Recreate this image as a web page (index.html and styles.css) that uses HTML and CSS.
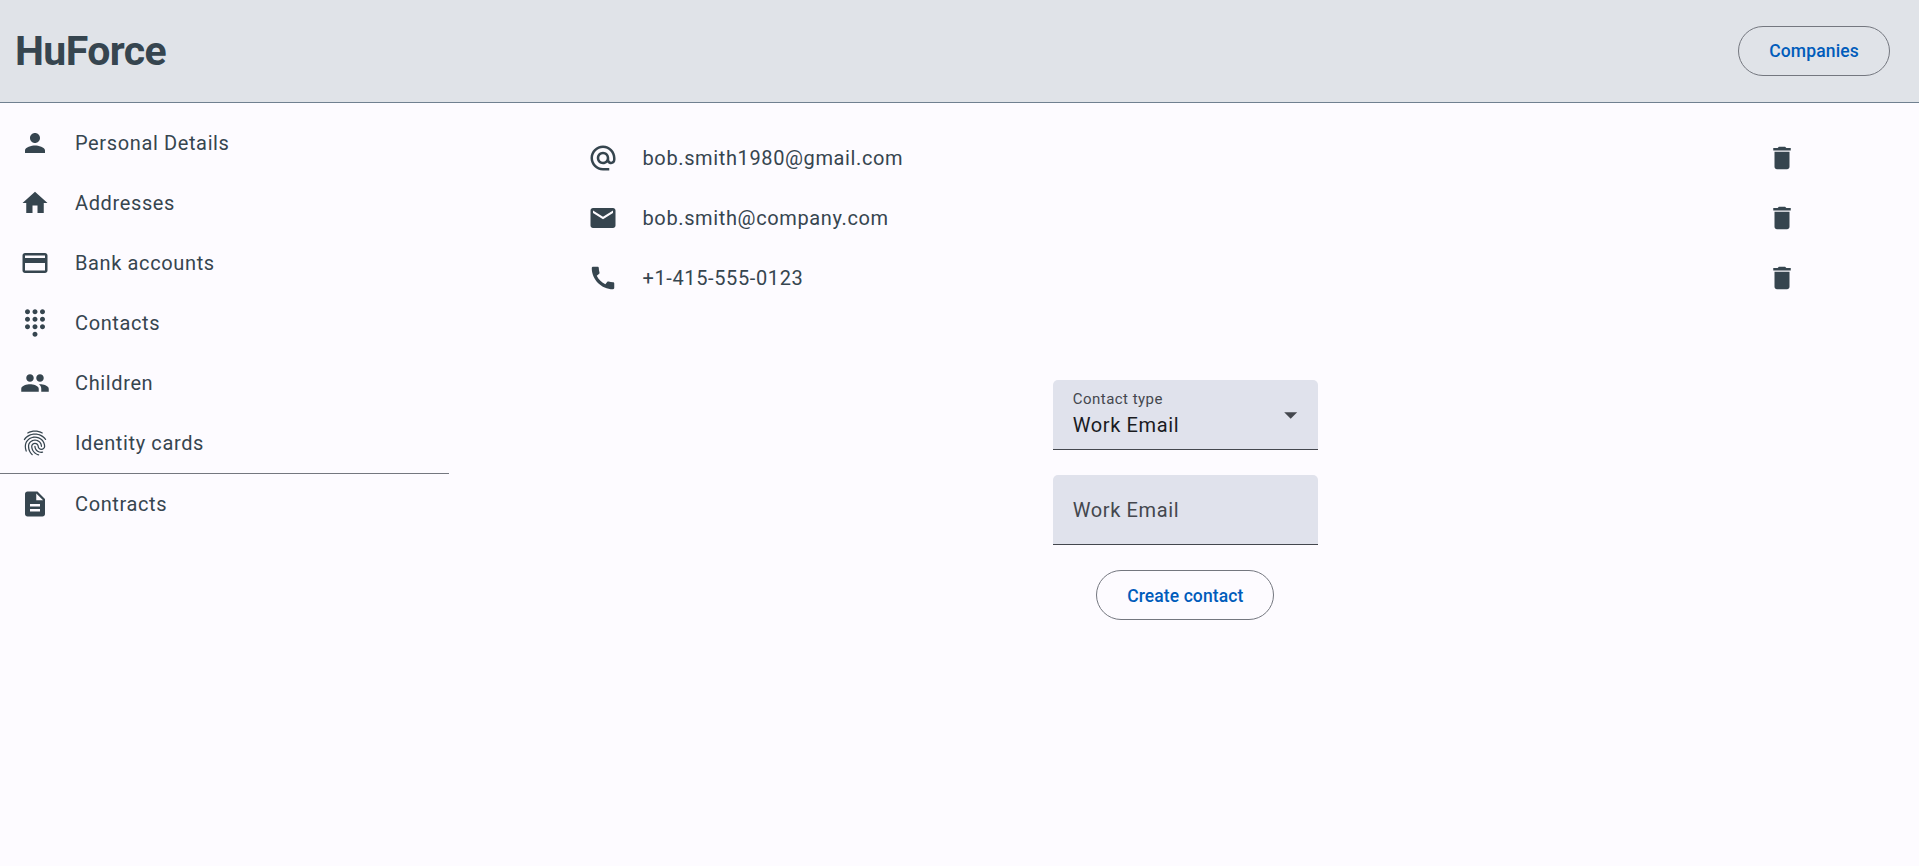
FILE: index.html
```html
<!DOCTYPE html>
<html lang="en">
<head>
<meta charset="utf-8">
<title>HuForce</title>
<link rel="stylesheet" href="styles.css">
</head>
<body>
<header class="topbar">
  <h1 class="brand">HuForce</h1>
  <button class="btn">Companies</button>
</header>
<div class="layout">
  <nav class="sidebar">
    <a class="row"><svg class="icon" viewBox="0 0 24 24"><path d="M12 12c2.21 0 4-1.79 4-4s-1.79-4-4-4-4 1.790-4 4 1.790 4 4 4zm0 2c-2.670 0-8 1.340-8 4v2h16v-2c0-2.660-5.330-4-8-4z"/></svg><span>Personal Details</span></a>
    <a class="row"><svg class="icon" viewBox="0 0 24 24"><path d="M10 20v-6h4v6h5v-8h3L12 3 2 12h3v8z"/></svg><span>Addresses</span></a>
    <a class="row"><svg class="icon" viewBox="0 0 24 24"><path d="M20 4H4c-1.110 0-1.990.89-1.990 2L2 18c0 1.110.89 2 2 2h16c1.110 0 2-.89 2-2V6c0-1.110-.89-2-2-2zm0 14H4v-6h16v6zm0-10H4V6h16v2z"/></svg><span>Bank accounts</span></a>
    <a class="row"><svg class="icon" viewBox="0 0 24 24"><path d="M12 19c-1.100 0-2 .9-2 2s.9 2 2 2 2-.9 2-2-.9-2-2-2zM6 1c-1.100 0-2 .9-2 2s.9 2 2 2 2-.9 2-2-.9-2-2-2zm0 6c-1.100 0-2 .9-2 2s.9 2 2 2 2-.9 2-2-.9-2-2-2zm0 6c-1.100 0-2 .9-2 2s.9 2 2 2 2-.9 2-2-.9-2-2-2zm12-8c1.100 0 2-.9 2-2s-.9-2-2-2-2 .9-2 2 .9 2 2 2zm-6 8c-1.100 0-2 .9-2 2s.9 2 2 2 2-.9 2-2-.9-2-2-2zm6 0c-1.100 0-2 .9-2 2s.9 2 2 2 2-.9 2-2-.9-2-2-2zm0-6c-1.100 0-2 .9-2 2s.9 2 2 2 2-.9 2-2-.9-2-2-2zm-6 0c-1.100 0-2 .9-2 2s.9 2 2 2 2-.9 2-2-.9-2-2-2zm0-6c-1.100 0-2 .9-2 2s.9 2 2 2 2-.9 2-2-.9-2-2-2z"/></svg><span>Contacts</span></a>
    <a class="row"><svg class="icon" viewBox="0 0 24 24"><path d="M16 11c1.660 0 2.990-1.340 2.990-3S17.660 5 16 5s-3 1.340-3 3 1.340 3 3 3zm-8 0c1.660 0 2.990-1.340 2.990-3S9.660 5 8 5 5 6.340 5 8s1.340 3 3 3zm0 2c-2.330 0-7 1.170-7 3.500V19h14v-2.500c0-2.330-4.670-3.500-7-3.500zm8 0c-.29 0-.62.020-.97.050 1.160.84 1.970 1.970 1.970 3.450V19h6v-2.500c0-2.330-4.670-3.500-7-3.500z"/></svg><span>Children</span></a>
    <a class="row"><svg class="icon" viewBox="0 0 24 24"><path d="M17.810 4.470c-.08 0-.16-.02-.23-.06C15.660 3.420 14 3 12.010 3c-1.980 0-3.860.47-5.570 1.410-.24.13-.54.04-.68-.2-.13-.24-.04-.55.2-.68C7.820 2.520 9.860 2 12.010 2c2.130 0 3.990.47 6.030 1.520.25.13.34.43.21.67-.09.18-.26.28-.44.28zM3.500 9.720c-.1 0-.2-.03-.29-.09-.23-.16-.28-.47-.12-.7.99-1.400 2.250-2.500 3.750-3.270C9.980 4.040 14 4.030 17.150 5.650c1.500.77 2.760 1.860 3.750 3.250.16.22.11.54-.12.7-.23.16-.54.11-.7-.12-.9-1.260-2.040-2.250-3.390-2.940-2.870-1.470-6.540-1.470-9.400.01-1.360.7-2.500 1.700-3.400 2.960-.08.14-.23.21-.39.21zm6.250 12.070c-.13 0-.26-.05-.35-.15-.87-.87-1.340-1.430-2.010-2.640-.69-1.230-1.050-2.730-1.050-4.340 0-2.970 2.540-5.390 5.660-5.390s5.660 2.420 5.660 5.390c0 .28-.22.5-.5.5s-.5-.22-.5-.5c0-2.420-2.090-4.390-4.660-4.390-2.570 0-4.660 1.970-4.660 4.390 0 1.440.32 2.770.93 3.850.64 1.150 1.080 1.640 1.850 2.420.19.2.19.51 0 .71-.11.1-.24.15-.37.15zm7.170-1.850c-1.190 0-2.240-.3-3.100-.89-1.490-1.010-2.380-2.650-2.380-4.390 0-.28.22-.5.5-.5s.5.22.5.5c0 1.410.72 2.740 1.940 3.560.71.48 1.540.71 2.540.71.24 0 .64-.03 1.040-.1.27-.05.53.13.58.41.05.27-.13.53-.41.58-.57.11-1.070.12-1.210.12zM14.910 22c-.04 0-.09-.01-.13-.02-1.590-.44-2.630-1.030-3.720-2.100-1.400-1.390-2.170-3.240-2.170-5.220 0-1.620 1.380-2.940 3.080-2.940 1.700 0 3.080 1.320 3.080 2.940 0 1.070.93 1.940 2.080 1.940s2.080-.87 2.080-1.940c0-3.770-3.250-6.830-7.250-6.830-2.840 0-5.440 1.580-6.610 4.030-.39.81-.59 1.760-.59 2.800 0 .78.07 2.010.67 3.610.1.26-.03.55-.29.64-.26.1-.55-.04-.64-.29-.49-1.310-.73-2.610-.73-3.960 0-1.200.23-2.290.68-3.240 1.330-2.790 4.280-4.600 7.510-4.600 4.550 0 8.250 3.510 8.250 7.830 0 1.620-1.380 2.940-3.080 2.940s-3.080-1.320-3.080-2.940c0-1.070-.93-1.940-2.080-1.940s-2.080.87-2.080 1.940c0 1.710.66 3.310 1.870 4.510.95.94 1.860 1.460 3.270 1.850.27.07.42.35.35.61-.05.23-.26.38-.47.38z"/></svg><span>Identity cards</span></a>
    <hr class="divider">
    <a class="row"><svg class="icon" viewBox="0 0 24 24"><path d="M14 2H6c-1.100 0-1.990.9-1.990 2L4 20c0 1.100.89 2 1.990 2H18c1.100 0 2-.9 2-2V8l-6-6zm2 16H8v-2h8v2zm0-4H8v-2h8v2zm-3-5V3.500L18.500 9H13z"/></svg><span>Contracts</span></a>
  </nav>
  <main class="content">
    <div class="contacts">
      <div class="row"><svg class="icon" viewBox="0 0 24 24"><path d="M12 2C6.480 2 2 6.480 2 12s4.480 10 10 10h5v-2h-5c-4.340 0-8-3.660-8-8s3.660-8 8-8 8 3.660 8 8v1.430c0 .79-.71 1.570-1.500 1.570s-1.500-.78-1.500-1.570V12c0-2.760-2.240-5-5-5s-5 2.240-5 5 2.240 5 5 5c1.380 0 2.640-.56 3.540-1.470.65.89 1.770 1.470 2.960 1.470 1.970 0 3.500-1.600 3.500-3.570V12c0-5.520-4.480-10-10-10zm0 13c-1.660 0-3-1.340-3-3s1.340-3 3-3 3 1.340 3 3-1.340 3-3 3z"/></svg><span class="value">bob.smith1980@gmail.com</span><svg class="icon" viewBox="0 0 24 24"><path d="M6 19c0 1.100.9 2 2 2h8c1.100 0 2-.9 2-2V7H6v12zM19 4h-3.500l-1-1h-5l-1 1H5v2h14V4z"/></svg></div>
      <div class="row"><svg class="icon" viewBox="0 0 24 24"><path d="M20 4H4c-1.100 0-1.990.9-1.990 2L2 18c0 1.100.9 2 2 2h16c1.100 0 2-.9 2-2V6c0-1.100-.9-2-2-2zm0 4l-8 5-8-5V6l8 5 8-5v2z"/></svg><span class="value">bob.smith@company.com</span><svg class="icon" viewBox="0 0 24 24"><path d="M6 19c0 1.100.9 2 2 2h8c1.100 0 2-.9 2-2V7H6v12zM19 4h-3.500l-1-1h-5l-1 1H5v2h14V4z"/></svg></div>
      <div class="row"><svg class="icon" viewBox="0 0 24 24"><path d="M20.010 15.380c-1.230 0-2.420-.2-3.530-.56-.35-.12-.74-.03-1.010.24l-1.570 1.970c-2.830-1.350-5.480-3.900-6.890-6.830l1.950-1.660c.27-.28.35-.67.24-1.020-.37-1.110-.56-2.300-.56-3.530 0-.54-.45-.99-.99-.99H4.190C3.650 3 3 3.240 3 3.990 3 13.280 10.730 21 20.010 21c.71 0 .99-.63.99-1.180v-3.450c0-.54-.45-.99-.99-.99z"/></svg><span class="value">+1-415-555-0123</span><svg class="icon" viewBox="0 0 24 24"><path d="M6 19c0 1.100.9 2 2 2h8c1.100 0 2-.9 2-2V7H6v12zM19 4h-3.500l-1-1h-5l-1 1H5v2h14V4z"/></svg></div>
    </div>
    <form class="form">
      <div class="field">
        <div class="field-text"><span class="label">Contact type</span><span class="selected">Work Email</span></div>
        <svg class="arrow" viewBox="0 0 14 7"><path d="M0.200 0.200h13l-6.500 6.500z"/></svg>
      </div>
      <div class="field"><span>Work Email</span></div>
      <button class="btn btn-create" type="button">Create contact</button>
    </form>
  </main>
</div>
</body>
</html>
```
FILE: styles.css
```css
* { box-sizing: border-box; }

body {
  margin: 0;
  min-height: 100vh;
  background: #fdfbff;
  color: #36454f;
  font: 400 20px/30px Roboto, sans-serif;
  letter-spacing: 0.625px;
}

.topbar {
  display: flex;
  align-items: center;
  justify-content: space-between;
  height: 103px;
  padding: 0 29px 0 15px;
  background: #e0e3e8;
  border-bottom: 1px solid #708090;
}

.brand {
  margin: 0;
  font-size: 41px;
  font-weight: 700;
  line-height: 50px;
  letter-spacing: -0.6px;
}

.btn {
  height: 50px;
  padding: 0 30px;
  border: 1px solid #74777f;
  border-radius: 25px;
  background: transparent;
  color: #005cbb;
  font: 500 17.500px/25px Roboto, sans-serif;
  letter-spacing: 0.15px;
}

.btn-create {
  padding-top: 2px;
  letter-spacing: 0.1px;
}

.layout { display: flex; }

.sidebar {
  width: 449px;
  padding-top: 10px;
}

.row {
  display: flex;
  align-items: center;
  height: 60px;
}

.sidebar .row {
  gap: 25px;
  padding-left: 20px;
}

.icon {
  flex: none;
  width: 30px;
  height: 30px;
  fill: #36454f;
}

.divider {
  height: 1px;
  margin: 0;
  border: 0;
  background: #74777f;
}

.content {
  flex: 1;
  padding: 25px 122px 0 138.500px;
}

.contacts .row { gap: 25px; }

.value { flex: 1; }

.form {
  display: flex;
  flex-direction: column;
  align-items: center;
  gap: 25px;
  margin: 72px 14px 0 0;
}

.field {
  display: flex;
  align-items: center;
  justify-content: space-between;
  width: 265px;
  height: 70px;
  padding: 0 20px;
  background: #e0e2ec;
  border-bottom: 1px solid #44474e;
  border-radius: 5px 5px 0 0;
  color: #44474e;
}

.field-text {
  display: flex;
  flex-direction: column;
}

.label {
  margin-top: -1px;
  font-size: 15px;
  line-height: 21px;
  letter-spacing: 0.470px;
}

.selected { color: #1a1b1f; }

.arrow {
  width: 14px;
  height: 7px;
  margin-top: 2px;
  fill: #44474e;
}
```
